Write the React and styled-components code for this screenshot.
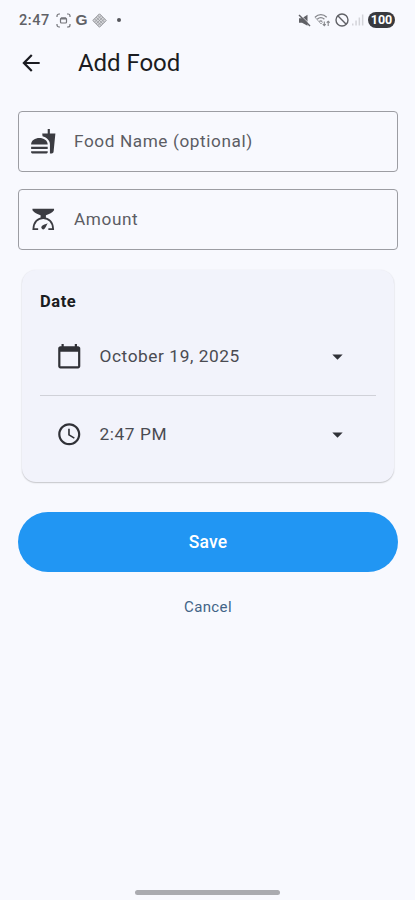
import React from "react";
import styled, { createGlobalStyle } from "styled-components";
import {
  MdArrowBack,
  MdFastfood,
  MdCalendarToday,
  MdAccessTime,
  MdArrowDropDown,
} from "react-icons/md";

const GlobalStyle = createGlobalStyle`
  * { box-sizing: border-box; }
  body {
    margin: 0;
    background: #f8f9fe;
    font-family: Roboto, sans-serif;
    color: #1b1c21;
  }
  button { font-family: inherit; border: 0; padding: 0; background: none; }
`;

const Screen = styled.div`
  display: flex;
  flex-direction: column;
  width: 415px;
  height: 900px;
  background: #f8f9fe;
  overflow: hidden;
`;

const StatusBar = styled.div`
  display: flex;
  justify-content: space-between;
  height: 40px;
  padding: 0 20px 0 19px;
  color: #606166;
`;

const StatusGroup = styled.div`
  display: flex;
  align-items: center;
  gap: ${(p) => p.$gap}px;
`;

const Clock = styled.span`
  width: 33px;
  font-size: 14.5px;
  font-weight: 500;
  letter-spacing: 0.6px;
  white-space: nowrap;
`;

const Google = styled.span`
  width: 13px;
  text-align: center;
  font: 700 15.5px "Liberation Sans", sans-serif;
`;

const Dot = styled.span`
  width: 4px;
  height: 4px;
  margin-left: 6px;
  border-radius: 50%;
  background: #55565b;
`;

const Battery = styled.span`
  width: 27px;
  height: 16px;
  border-radius: 8px;
  background: #38393e;
  color: #fff;
  font-size: 12.5px;
  font-weight: 700;
  line-height: 16px;
  text-align: center;
`;

const AppBar = styled.header`
  display: flex;
  align-items: center;
  height: 46px;
  padding-left: 18px;
`;

const IconButton = styled.button`
  display: flex;
  width: 26px;
  height: 26px;
  color: #1b1c21;
`;

const Title = styled.h1`
  margin: 0 0 0 34px;
  font-size: 24px;
  font-weight: 400;
  line-height: 30px;
  letter-spacing: -0.05px;
`;

const Form = styled.main`
  display: flex;
  flex-direction: column;
  flex: 1;
  padding: 25px 17px 0 18px;
`;

const Field = styled.div`
  display: flex;
  align-items: center;
  gap: 17.5px;
  height: 61px;
  margin-bottom: 17px;
  padding: 0 0 1px 11px;
  border: 1px solid #9c9da3;
  border-radius: 4px;
  color: #3b3c42;
`;

const FieldLabel = styled.span`
  color: #5c5d64;
  font-size: 17.2px;
  letter-spacing: 0.6px;
`;

const Card = styled.section`
  height: 212px;
  margin: 3px 4px 0;
  padding: 20px 18px 0;
  border-radius: 14px;
  background: #f2f3fb;
  box-shadow: 0 1px 1.5px rgba(0, 0, 0, 0.2), 0 0 2px rgba(0, 0, 0, 0.05);
`;

const CardTitle = styled.h2`
  margin: 0;
  font-size: 16.5px;
  font-weight: 700;
  line-height: 24px;
  letter-spacing: 0.55px;
`;

const PickerRow = styled.div`
  display: flex;
  align-items: center;
  height: ${(p) => p.$height}px;
  padding: ${(p) => p.$top}px 26px 0 16px;
  border-bottom: ${(p) => (p.$divided ? "1px solid #d0d1d8" : "0")};
  color: #303137;
`;

const PickerValue = styled.span`
  flex: 1;
  margin-left: 17px;
  color: #4a4b52;
  font-size: 17.3px;
  letter-spacing: 0.57px;
`;

const SaveButton = styled.button`
  height: 60px;
  margin-top: 30px;
  border-radius: 30px;
  background: #2196f3;
  color: #fff;
  font-size: 17.5px;
  font-weight: 500;
  letter-spacing: 0.2px;
`;

const CancelButton = styled.button`
  align-self: center;
  margin-top: 23px;
  color: #426487;
  font-size: 15px;
  font-weight: 400;
  line-height: 24px;
  letter-spacing: 0.38px;
`;

const HomeIndicator = styled.div`
  align-self: center;
  width: 145px;
  height: 5px;
  margin-bottom: 5px;
  border-radius: 3px;
  background: #aaabb0;
`;

const ScaleIcon = () => (
  <svg width="26.5" height="27" viewBox="0 0 27 27" fill="none" stroke="currentColor" strokeWidth="1.8">
    <path d="M2.5 2.6h22v1.6c-2 2.6-4.6 3.9-8.3 5v3h-5.4v-3c-3.7-1.1-6.3-2.4-8.3-5Z" fill="currentColor" stroke="none" />
    <path d="M8.3 23.4H3.4C3.6 16 8 12 13.5 12s9.9 4 10.1 11.4h-4.9" />
    <path d="M18 17.4c-1.1 2.1-2.2 4.6-3.2 5.5a1.9 1.9 0 0 1-2.7-2.7c1-1 3.8-1.9 5.9-2.8Z" fill="currentColor" stroke="none" />
  </svg>
);

const CaptureIcon = () => (
  <svg width="15" height="15" viewBox="0 0 15 15" fill="none" stroke="#74757a" strokeWidth="1.2">
    <path d="M1 4V3a2 2 0 0 1 2-2h1M11 1h1a2 2 0 0 1 2 2v1M14 11v1a2 2 0 0 1-2 2h-1M4 14H3a2 2 0 0 1-2-2v-1" />
    <rect x="4.5" y="5" width="6" height="5" rx="1" />
    <path d="M5 5.5h5" strokeWidth="2" />
  </svg>
);

const DiamondIcon = () => (
  <svg width="15" height="15" viewBox="0 0 15 15" fill="none" stroke="#929398" strokeWidth="1">
    <path d="M7.5.8 14.2 7.5 7.5 14.2.8 7.5Z" fill="#d5d6da" />
    <path d="m4.1 4.1 6.8 6.8M10.9 4.1l-6.8 6.8M5.8 2.5l6.7 6.7M2.5 5.8l6.7 6.7M9.2 2.5 2.5 9.2M12.5 5.8l-6.7 6.7" strokeWidth=".7" />
  </svg>
);

const MuteIcon = () => (
  <svg width="13" height="13" viewBox="0 0 13 13">
    <path d="M1 4.2h3L9.5.8v11L4 8.8H1Z" fill="#606166" />
    <path d="m2.2.8 10 9.8" stroke="#f8f9fe" strokeWidth="1" />
    <path d="m1 1 11 11" stroke="#606166" strokeWidth="1.4" />
  </svg>
);

const WifiIcon = () => (
  <svg width="17" height="14" viewBox="0 0 17 14" fill="none" stroke="#85868b" strokeWidth="1.3">
    <path d="M1 4.2C4.5.8 9.3.8 12.7 4.2M3.2 6.3c2.2-2 5-2 7.2 0M5.3 8.4c1-.8 2-.8 3 0" />
    <path d="M1 4.2 7 11l1.6-1.8" strokeWidth=".7" />
    <path d="M10.3 12.7V8.5M8.8 11.2l1.5 1.5 1.4-1.5M14.2 13V8.2M12.7 9.7l1.5-1.5 1.5 1.5" strokeWidth="1.1" />
  </svg>
);

const BlockIcon = () => (
  <svg width="14" height="14" viewBox="0 0 14 14" fill="none" stroke="#606166" strokeWidth="1.4">
    <circle cx="7" cy="7" r="6" />
    <path d="m2.8 2.8 8.4 8.4" />
  </svg>
);

const SignalIcon = () => (
  <svg width="12" height="12" viewBox="0 0 12 12" fill="#d3d4d9">
    <path d="M0 9.5h1.5v2H0ZM3.3 6.5h1.5v5H3.3ZM6.6 3.5h1.5v8H6.6ZM9.9.5h1.5v11H9.9Z" />
  </svg>
);

export default function App() {
  return (
    <>
      <GlobalStyle />
      <Screen>
        <StatusBar>
          <StatusGroup $gap={4}>
            <Clock>2:47</Clock>
            <CaptureIcon />
            <Google>G</Google>
            <DiamondIcon />
            <Dot />
          </StatusGroup>
          <StatusGroup $gap={3.6}>
            <MuteIcon />
            <WifiIcon />
            <BlockIcon />
            <SignalIcon />
            <Battery>100</Battery>
          </StatusGroup>
        </StatusBar>
        <AppBar>
          <IconButton aria-label="Back">
            <MdArrowBack size={26} />
          </IconButton>
          <Title>Add Food</Title>
        </AppBar>
        <Form>
          <Field>
            <MdFastfood size={26.5} />
            <FieldLabel>Food Name (optional)</FieldLabel>
          </Field>
          <Field>
            <ScaleIcon />
            <FieldLabel>Amount</FieldLabel>
          </Field>
          <Card>
            <CardTitle>Date</CardTitle>
            <PickerRow $height={82} $top={3} $divided>
              <MdCalendarToday size={26.5} />
              <PickerValue>October 19, 2025</PickerValue>
              <MdArrowDropDown size={25} />
            </PickerRow>
            <PickerRow $height={76} $top={0}>
              <MdAccessTime size={26.5} />
              <PickerValue>2:47 PM</PickerValue>
              <MdArrowDropDown size={25} />
            </PickerRow>
          </Card>
          <SaveButton>Save</SaveButton>
          <CancelButton>Cancel</CancelButton>
        </Form>
        <HomeIndicator />
      </Screen>
    </>
  );
}
